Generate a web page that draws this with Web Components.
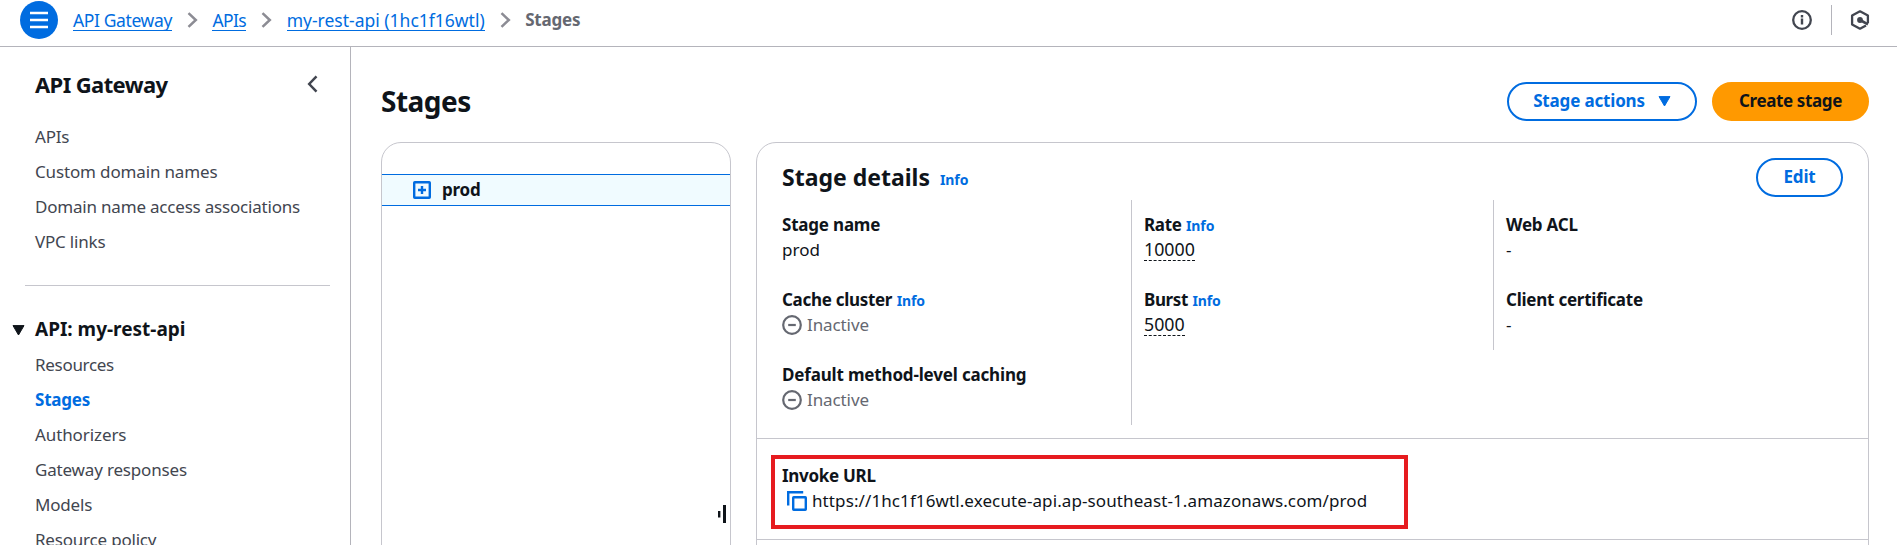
<!DOCTYPE html>
<html lang="en">
<head>
<meta charset="utf-8">
<title>API Gateway - Stages</title>
<style>
html,body{margin:0;height:545px;overflow:hidden;background:#fff}
body{font:400 17px/25px "Noto Sans",sans-serif;color:#0f141a}
</style>
</head>
<body>
<console-app></console-app>
<script>
const define = (name, html) => {
  const t = document.createElement('template');
  t.innerHTML = html;
  customElements.define(name, class extends HTMLElement {
    constructor() {
      super();
      this.attachShadow({mode: 'open'}).append(t.content.cloneNode(true));
    }
  });
};

define('crumb-link', `<style>
:host{display:flex;align-items:center;color:#006ce0;font-size:17.5px}
span{display:block;height:23px;line-height:24px;border-bottom:1px solid #006ce0;box-sizing:border-box;white-space:nowrap}
svg{margin:1px 14.5px 0 15px;flex:none}
:host([current]){color:#656871;font-weight:700;font-size:17px}
:host([current]) span{border-color:transparent}
:host([current]) svg{display:none}
</style><span><slot></slot></span><svg width="11" height="16" viewBox="0 0 11 16" fill="none" stroke="#8c8c94" stroke-width="2.5"><path d="M1.5 1.2 8.8 8l-7.3 6.8"/></svg>`);

define('top-bar', `<style>
:host{display:flex;align-items:center;height:46px;border-bottom:1px solid #b4b4bb;box-sizing:content-box}
.bar{display:flex;align-items:center;width:100%;height:40px;align-self:flex-start}
.menu{width:38px;height:38px;margin:0 15px 0 20px;flex:none}
nav{display:flex;align-items:center;height:24px;margin-bottom:2px}
.tools{margin-left:auto;display:flex;align-items:center;padding-right:27px}
.sep{width:1px;height:30px;background:#b4b4bb;margin:0 18px 0 19px}
</style>
<div class="bar">
<svg class="menu" viewBox="0 0 38 38"><circle cx="19" cy="19" r="19" fill="#006ce0"/><path d="M10 12h18M10 19h18M10 26h18" stroke="#fff" stroke-width="2.3"/></svg>
<nav>
<crumb-link style="letter-spacing:-.38px">API Gateway</crumb-link>
<crumb-link style="letter-spacing:-.6px">APIs</crumb-link>
<crumb-link>my-rest-api (1hc1f16wtl)</crumb-link>
<crumb-link current style="letter-spacing:-.2px">Stages</crumb-link>
</nav>
<div class="tools">
<svg width="20" height="20" viewBox="0 0 20 20"><circle cx="10" cy="10" r="8.8" fill="none" stroke="#424650" stroke-width="2.3"/><path d="M10 8.6v6M10 5v2.4" stroke="#424650" stroke-width="2.4"/></svg>
<span class="sep"></span>
<svg width="20" height="20" viewBox="0 0 20 20" fill="none" stroke="#424650"><path d="M17.9 13V5.6L10 1.3 2.1 5.6v8.8L10 18.7l6-3.3" stroke-width="2.3" stroke-linejoin="round"/><circle cx="10" cy="10" r="2.9" fill="#424650" stroke="none"/><path d="m10 10 8 4.4" stroke-width="2.6"/></svg>
</div></div>`);

define('nav-link', `<style>
:host{display:block;height:35px;line-height:35px;color:#424650;white-space:nowrap}
:host([active]){color:#006ce0;font-weight:700}
</style><slot></slot>`);

define('side-nav', `<style>
:host{display:block;box-sizing:border-box;width:351px;border-right:1px solid #b4b4bb;overflow:hidden}
.head{display:flex;justify-content:space-between;height:72px;padding:21px 32px 0 35px;box-sizing:border-box;font:700 22px/32px "Noto Sans",sans-serif;letter-spacing:-.6px}
.head svg{margin-top:7px}
.list{padding-left:35px}
hr{border:0;height:1px;background:#c6c6cd;margin:26px 20px 25px 25px}
.group{display:flex;align-items:center;height:36px;padding-left:12px;font-weight:700;font-size:19px}
.group svg{margin-right:10px;margin-top:2px}
</style>
<div class="head"><span>API Gateway</span><svg width="11" height="18" viewBox="0 0 11 18" fill="none" stroke="#424650" stroke-width="2.5"><path d="M9.5 1.4 2.2 9l7.3 7.6"/></svg></div>
<div class="list">
<nav-link style="letter-spacing:-.2px">APIs</nav-link>
<nav-link style="letter-spacing:-.15px">Custom domain names</nav-link>
<nav-link style="letter-spacing:-.2px">Domain name access associations</nav-link>
<nav-link style="letter-spacing:-.2px">VPC links</nav-link>
</div>
<hr>
<div class="group"><svg width="13" height="11" viewBox="0 0 13 11"><path d="M1 .6h11L6.5 10z" fill="#0f141a" stroke="#0f141a" stroke-linejoin="round"/></svg><span>API: my-rest-api</span></div>
<div class="list">
<nav-link style="letter-spacing:-.3px">Resources</nav-link>
<nav-link active style="letter-spacing:-.2px">Stages</nav-link>
<nav-link style="letter-spacing:-.1px">Authorizers</nav-link>
<nav-link style="letter-spacing:-.17px">Gateway responses</nav-link>
<nav-link style="letter-spacing:-.2px">Models</nav-link>
<nav-link style="letter-spacing:-.2px">Resource policy</nav-link>
</div>`);

define('ui-button', `<style>
:host{display:flex;align-items:center;justify-content:center;box-sizing:border-box;height:39px;border:2px solid #006ce0;border-radius:20px;color:#006ce0;font-weight:700;white-space:nowrap;line-height:33px;padding-bottom:2px}
:host([primary]){background:#ff9900;border-color:#ff9900;color:#0f141a}
</style><slot></slot>`);

define('info-link', `<style>:host{font:700 14px/20px "Noto Sans",sans-serif;color:#006ce0;letter-spacing:-.1px;margin-left:4.5px}</style>Info`);

define('data-field', `<style>
:host{display:block;padding:12px 0 13px;height:50px;white-space:nowrap}
.label{font-weight:700;height:25px}
.value{height:25px;letter-spacing:0}
</style><div class="label"><slot name="label"></slot></div><div class="value"><slot></slot></div>`);

define('status-inactive', `<style>
:host{display:flex;align-items:center;gap:5px;color:#656871;height:25px;letter-spacing:-.1px}
</style><svg width="20" height="20" viewBox="0 0 20 20" fill="none" stroke="#656871"><circle cx="10" cy="10" r="8.8" stroke-width="2.2"/><path d="M6.2 10h7.6" stroke-width="2.2"/></svg><span>Inactive</span>`);

define('limit-value', `<style>
:host{display:inline-block;box-sizing:border-box;height:24px;line-height:24px;font-size:17.8px;border-bottom:1px dashed #0f141a;vertical-align:top}
</style><slot></slot>`);

define('stage-tree', `<style>
:host{display:flex;flex-direction:column;box-sizing:border-box;width:350px;height:430px;border:1px solid #c6c6cd;border-radius:20px;padding-top:31px}
.row{display:flex;align-items:center;height:30px;border:solid #006ce0;border-width:1px 0;background:#f0fbff;padding-left:31px;font-weight:700}
.row span{margin-bottom:1px}
.row svg{margin-right:11px}
.grip{margin:299px 4px 0 auto}
</style>
<div class="row"><svg width="18" height="18" viewBox="0 0 18 18" fill="none" stroke="#006ce0" stroke-width="2.4"><rect x="1.2" y="1.2" width="15.6" height="15.6" rx=".6"/><path d="M9 5v8M5 9h8"/></svg><span style="letter-spacing:-.2px">prod</span></div>
<svg class="grip" width="8" height="18" viewBox="0 0 8 18" fill="#0f141a"><path d="M0 6h2.4v6.6H0zM5 0h3v18H5z"/></svg>`);

define('stage-details', `<style>
:host{display:block;box-sizing:border-box;width:1113px;height:430px;border:1px solid #c6c6cd;border-radius:20px}
.head{display:flex;height:57px;padding:15px 25px 0;box-sizing:border-box}
h2{margin:4px 0 0;font-size:23px;line-height:30px}
.head info-link{margin:12px 0 0 10px}
.head ui-button{margin-left:auto;width:87px;letter-spacing:-.2px}
.grid{display:grid;grid-template-columns:349px 362px 1fr;padding-left:25px;height:238px;box-sizing:border-box;align-items:start}
.col+.col{border-left:1px solid #c6c6cd;padding-left:12px}
.col.tall{min-height:225px}
.url{height:84px;border:solid #c6c6cd;border-width:1px 0;padding:16px 0 0 14px}
.mark{box-sizing:border-box;width:637px;height:74px;border:4px solid #e61b1f;padding:4px 0 0 7px;white-space:nowrap}
.mark div{display:flex;align-items:center;height:25px}
.mark b{letter-spacing:-.3px}
.mark svg{margin:0 5px 0 5px}
</style>
<div class="head"><h2>Stage details</h2><info-link></info-link><ui-button>Edit</ui-button></div>
<div class="grid">
<div class="col">
<data-field style="letter-spacing:-.2px"><span slot="label">Stage name</span>prod</data-field>
<data-field style="letter-spacing:-.3px"><span slot="label">Cache cluster<info-link></info-link></span><status-inactive></status-inactive></data-field>
<data-field style="letter-spacing:-.17px"><span slot="label">Default method-level caching</span><status-inactive></status-inactive></data-field>
</div>
<div class="col tall">
<data-field style="letter-spacing:-.35px"><span slot="label">Rate<info-link></info-link></span><limit-value>10000</limit-value></data-field>
<data-field style="letter-spacing:-.4px"><span slot="label">Burst<info-link></info-link></span><limit-value>5000</limit-value></data-field>
</div>
<div class="col">
<data-field style="letter-spacing:-.2px"><span slot="label">Web ACL</span>-</data-field>
<data-field style="letter-spacing:-.24px"><span slot="label">Client certificate</span>-</data-field>
</div>
</div>
<div class="url"><div class="mark"><div><b>Invoke URL</b></div><div><svg width="20" height="20" viewBox="0 0 20 20" fill="none" stroke="#006ce0" stroke-width="2.4"><path d="M1.2 14.5V1.2h15"/><rect x="6.2" y="6.2" width="12.6" height="12.6" rx=".5"/></svg><span style="letter-spacing:.1px">https://1hc1f16wtl.execute-api.ap-southeast-1.amazonaws.com/prod</span></div></div></div>`);

define('console-app', `<style>
:host{display:flex;flex-direction:column;height:545px;overflow:hidden}
.body{display:flex;flex:1;min-height:0}
main{flex:1;padding:35px 28px 0 30px;min-width:0}
header{display:flex;align-items:flex-start;height:60px;gap:15px}
h1{margin:0 auto 0 0;font-size:28px;line-height:39px;letter-spacing:-.5px}
.panels{display:flex;gap:25px}
ui-button svg{margin-left:13px;margin-top:2px}
</style>
<top-bar></top-bar>
<div class="body"><side-nav></side-nav>
<main><header><h1>Stages</h1>
<ui-button style="width:190px;letter-spacing:-.17px">Stage actions<svg width="13" height="11" viewBox="0 0 13 11"><path d="M1 .6h11L6.5 10z" fill="#006ce0" stroke="#006ce0" stroke-linejoin="round"/></svg></ui-button>
<ui-button primary style="width:157px;letter-spacing:-.37px">Create stage</ui-button></header>
<div class="panels"><stage-tree></stage-tree><stage-details></stage-details></div>
</main></div>`);
</script>
</body>
</html>
